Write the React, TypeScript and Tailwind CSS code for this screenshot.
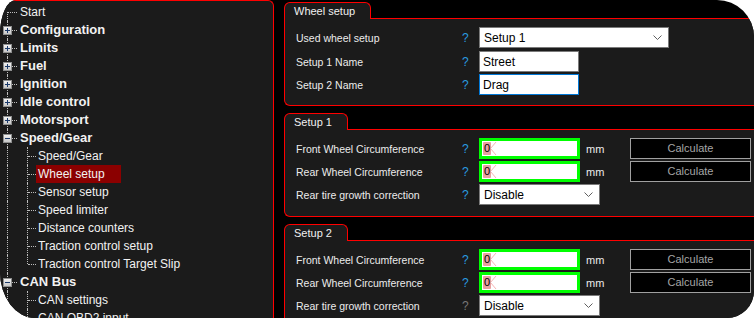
import React from "react";

type Node = {
  label: string;
  bold?: boolean;
  box?: "+" | "-" | null;
  children?: string[];
  selected?: string;
  openEnd?: boolean;
};

const tree: Node[] = [
  { label: "Start", box: null },
  { label: "Configuration", bold: true, box: "+" },
  { label: "Limits", bold: true, box: "+" },
  { label: "Fuel", bold: true, box: "+" },
  { label: "Ignition", bold: true, box: "+" },
  { label: "Idle control", bold: true, box: "+" },
  { label: "Motorsport", bold: true, box: "+" },
  {
    label: "Speed/Gear",
    bold: true,
    box: "-",
    selected: "Wheel setup",
    children: [
      "Speed/Gear",
      "Wheel setup",
      "Sensor setup",
      "Speed limiter",
      "Distance counters",
      "Traction control setup",
      "Traction control Target Slip",
    ],
  },
  { label: "CAN Bus", bold: true, box: "-", children: ["CAN settings", "CAN OBD2 input"], openEnd: true },
];

const ExpandBox = ({ sign }: { sign: "+" | "-" }) => (
  <svg width="9" height="9" viewBox="0 0 9 9" className="absolute left-[3px] top-[5px]">
    <defs>
      <linearGradient id={`g${sign}`} x1="0" y1="0" x2="0" y2="1">
        <stop offset="0" stopColor="#f4f4f4" />
        <stop offset="1" stopColor="#c4c4c4" />
      </linearGradient>
    </defs>
    <rect x="0.5" y="0.5" width="8" height="8" fill={`url(#g${sign})`} stroke="#8e8f8f" />
    <line x1="2" y1="4.5" x2="7" y2="4.5" stroke="#1b3a6a" />
    {sign === "+" && <line x1="4.5" y1="2" x2="4.5" y2="7" stroke="#1b3a6a" />}
  </svg>
);

const TopRow = ({ node, first }: { node: Node; first?: boolean }) => (
  <div className="flex h-[18px] items-center">
    <div className="relative h-full w-[19px] shrink-0">
      <div
        className={`absolute left-[7px] bottom-0 border-l border-dotted border-[#bdbdbd] ${first ? "top-[9px]" : "top-0"}`}
      />
      <div className="absolute left-[8px] top-[9px] w-[9px] border-t border-dotted border-[#bdbdbd]" />
      {node.box && <ExpandBox sign={node.box} />}
    </div>
    <span className={`whitespace-nowrap pl-px ${node.bold ? "text-[13px] font-bold" : "text-[12px]"}`}>
      {node.label}
    </span>
  </div>
);

const ChildRow = ({ label, last, selected }: { label: string; last: boolean; selected: boolean }) => (
  <div className="flex h-[18px] items-center">
    <div className="relative h-full w-[19px] shrink-0">
      <div className="absolute left-[7px] top-0 bottom-0 border-l border-dotted border-[#bdbdbd]" />
    </div>
    <div className="relative h-full w-[17px] shrink-0">
      <div
        className={`absolute left-[8px] top-0 border-l border-dotted border-[#bdbdbd] ${last ? "h-[9px]" : "bottom-0"}`}
      />
      <div className="absolute left-[9px] top-[9px] w-[8px] border-t border-dotted border-[#bdbdbd]" />
    </div>
    <span
      className={`flex h-full items-center whitespace-nowrap pl-[2px] pr-[16px] text-[12px] ${
        selected ? "bg-[#8b0000]" : ""
      }`}
    >
      {label}
    </span>
  </div>
);

const TreePanel = () => (
  <div className="h-full w-[274px] shrink-0 overflow-hidden rounded-tr-[6px] border-t border-r border-[#ff0000] bg-[#1b1b1b] pt-[2px] text-[#f2f2f2]">
    {tree.map((n, i) => (
      <div key={n.label}>
        <TopRow node={n} first={i === 0} />
        {n.children?.map((c, j) => (
          <ChildRow
            key={c}
            label={c}
            last={!n.openEnd && j === n.children!.length - 1}
            selected={n.selected === c}
          />
        ))}
      </div>
    ))}
  </div>
);

const Chevron = () => (
  <svg width="9" height="5" viewBox="0 0 9 5" className="mr-[6px]">
    <polyline points="0.5,0.5 4.5,4.5 8.5,0.5" fill="none" stroke="#606060" strokeWidth="1" />
  </svg>
);

const Select = ({ value, w }: { value: string; w: string }) => (
  <div className={`flex h-[21px] ${w} items-center justify-between border border-[#7a7a7a] bg-white text-[12px] text-black`}>
    <span className="pl-[4px]">{value}</span>
    <Chevron />
  </div>
);

const TextBox = ({ value, focused }: { value: string; focused?: boolean }) => (
  <div
    className={`flex h-[21px] w-[100px] items-center border bg-white pl-[3px] text-[12px] text-black ${
      focused ? "border-[#0078d7]" : "border-[#7a7a7a]"
    }`}
  >
    {value}
  </div>
);

const ErrorInput = () => (
  <div className="relative flex h-[21px] w-[101px] items-center border-[3px] border-[#00ff00] bg-white pl-[1px]">
    <svg width="14" height="15" viewBox="0 0 14 15" className="absolute left-[1px] top-0">
      <line x1="2" y1="1" x2="13" y2="14" stroke="#f7b4b4" />
      <line x1="13" y1="1" x2="2" y2="14" stroke="#f7b4b4" />
    </svg>
    <span className="relative rounded-[1px] bg-[#e8a0a0] px-px text-[11px] leading-[13px] text-black">0</span>
  </div>
);

const Help = ({ dim }: { dim?: boolean }) => (
  <span className={`w-[17px] shrink-0 text-[12px] ${dim ? "text-[#777777]" : "text-[#2a9be0]"}`}>?</span>
);

const Row = ({ label, children, dim }: { label: string; children: React.ReactNode; dim?: boolean }) => (
  <div className="flex h-[21px] items-center">
    <span className="w-[166px] shrink-0 whitespace-nowrap pt-[2px] text-[10.5px] text-[#ececec]">{label}</span>
    <Help dim={dim} />
    {children}
  </div>
);

const Calculate = () => (
  <div className="flex h-[21px] w-[121px] items-center justify-center border border-[#a0a0a0] bg-black text-[11px] text-[#a6a6a6]">
    Calculate
  </div>
);

const Group = ({ title, tabW, children }: { title: string; tabW: string; children: React.ReactNode }) => (
  <div className="w-[490px] shrink-0">
    <div className="flex h-[17px]">
      <div
        className={`${tabW} shrink-0 rounded-t-[6px] border-t border-l border-r border-[#ff0000] bg-[#1b1b1b] pl-[9px] pt-[1px] text-[11px] leading-[14px] text-[#f0f0f0]`}
      >
        {title}
      </div>
      <div className="flex-1 border-b border-[#ff0000]" />
    </div>
    <div className="flex h-[87px] flex-col gap-[2px] rounded-bl-[6px] border-l border-b border-[#ff0000] bg-[#1b1b1b] pl-[11px] pt-[8px]">
      {children}
    </div>
  </div>
);

const MmRow = ({ label }: { label: string }) => (
  <Row label={label}>
    <ErrorInput />
    <span className="ml-[6px] w-[44px] shrink-0 pt-[2px] text-[11px] text-[#ececec]">mm</span>
    <Calculate />
  </Row>
);

const SetupGroup = ({ title, dimLast }: { title: string; dimLast?: boolean }) => (
  <Group title={title} tabW="w-[64px]">
    <MmRow label="Front Wheel Circumference" />
    <MmRow label="Rear Wheel Circumference" />
    <Row label="Rear tire growth correction" dim={dimLast}>
      <Select value="Disable" w="w-[121px]" />
    </Row>
  </Group>
);

export default function App() {
  return (
    <div className="h-[318px] w-[754px] bg-white" style={{ fontFamily: '"Liberation Sans", Arial, sans-serif' }}>
      <div className="flex h-full w-full overflow-hidden rounded-tl-[16px_34px] rounded-tr-[37px] rounded-br-[27px] rounded-bl-[35px_46px] bg-black">
        <TreePanel />
        <div className="ml-[10px] flex min-w-0 flex-1 flex-col gap-[7px] pt-[2px]">
          <Group title="Wheel setup" tabW="w-[87px]">
            <Row label="Used wheel setup">
              <Select value="Setup 1" w="w-[190px]" />
            </Row>
            <div className="mt-px">
              <Row label="Setup 1 Name">
                <TextBox value="Street" />
              </Row>
            </div>
            <Row label="Setup 2 Name">
              <TextBox value="Drag" focused />
            </Row>
          </Group>
          <SetupGroup title="Setup 1" />
          <SetupGroup title="Setup 2" dimLast />
        </div>
      </div>
    </div>
  );
}
